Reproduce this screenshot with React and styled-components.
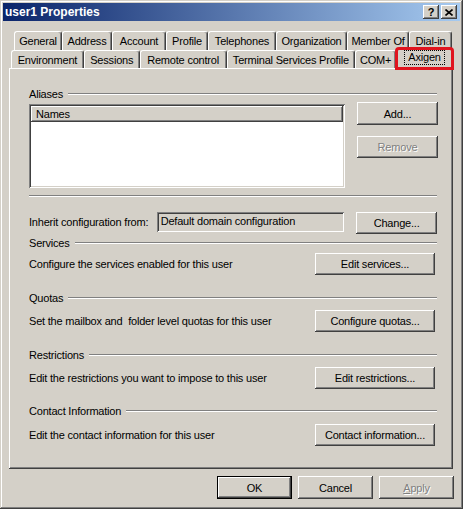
import React from 'react';
import styled, { createGlobalStyle, css } from 'styled-components';

const GlobalStyle = createGlobalStyle`
  html, body {
    margin: 0;
    padding: 0;
    background: #d4d0c8;
  }
  body {
    font-family: "Liberation Sans", Arial, sans-serif;
    font-size: 11px;
    letter-spacing: -0.2px;
    color: #000;
  }
`;

// classic 3d bevels
const raised = css`
  box-shadow:
    inset -1px -1px #404040,
    inset 1px 1px #ffffff,
    inset -2px -2px #808080,
    inset 2px 2px #d4d0c8;
`;

const sunken = css`
  box-shadow:
    inset 1px 1px #808080,
    inset -1px -1px #ffffff,
    inset 2px 2px #404040,
    inset -2px -2px #d4d0c8;
`;

const Window = styled.div`
  width: 463px;
  height: 509px;
  box-sizing: border-box;
  padding: 3px;
  background: #d4d0c8;
  display: flex;
  flex-direction: column;
  box-shadow:
    inset -1px -1px #404040,
    inset 1px 1px #d4d0c8,
    inset -2px -2px #808080,
    inset 2px 2px #ffffff;
`;

const TitleBar = styled.div`
  height: 18px;
  display: flex;
  align-items: center;
  justify-content: space-between;
  padding: 0 3px 0 2px;
  background: linear-gradient(to right, #0a246a, #a6caf0);
`;

const Title = styled.span`
  color: #fff;
  font-weight: bold;
  font-size: 12px;
  letter-spacing: 0;
`;

const TitleButtons = styled.div`
  display: flex;
  gap: 2px;
`;

const TitleButton = styled.div`
  width: 16px;
  height: 14px;
  background: #d4d0c8;
  ${raised};
  display: flex;
  align-items: center;
  justify-content: center;
  font-weight: bold;
  font-size: 11px;
  line-height: 1;
`;

const Body = styled.div`
  flex: 1;
  display: flex;
  flex-direction: column;
  padding: 10px 7px 0 6px;
`;

const TabRow = styled.div`
  display: flex;
  align-items: flex-end;
  height: ${p => p.h}px;
  margin-left: ${p => p.indent}px;
  position: relative;
  z-index: 1;
`;

const Tab = styled.div`
  box-sizing: border-box;
  width: ${p => p.w}px;
  height: ${p => (p.active ? 21 : p.h)}px;
  margin-bottom: ${p => (p.active ? -1 : 0)}px;
  background: #d4d0c8;
  border-top: 1px solid #fff;
  border-left: 1px solid #fff;
  border-right: 1px solid #404040;
  border-radius: 3px 3px 0 0;
  box-shadow: inset -1px 0 #808080;
  display: flex;
  align-items: center;
  justify-content: center;
  padding-bottom: ${p => (p.active ? 3 : 0)}px;
  white-space: nowrap;
  ${p => p.active && css`
    outline: 3px solid #e0141e;
    outline-offset: -2px;
  `}
`;

const FocusLabel = styled.span`
  border: 1px dotted #000;
  padding: 0 3px;
  line-height: 13px;
`;

const Panel = styled.div`
  height: 401px;
  box-sizing: border-box;
  padding: 20px 16px 0 20px;
  ${raised};
  display: flex;
  flex-direction: column;
`;

const Legend = styled.div`
  display: flex;
  align-items: center;
  height: 12px;
  margin-top: ${p => p.mt || 0}px;
`;

const Rule = styled.div`
  flex: 1;
  height: 0;
  border-top: 1px solid #808080;
  border-bottom: 1px solid #fff;
  margin-left: ${p => p.ml || 0}px;
  margin-top: ${p => p.mt || 0}px;
`;

const AliasBody = styled.div`
  display: flex;
  margin-top: 4px;
  height: 84px;
`;

const ListBox = styled.div`
  width: 316px;
  height: 84px;
  box-sizing: border-box;
  padding: 2px;
  background: #fff;
  ${sunken};
`;

const ListHeader = styled.div`
  width: 312px;
  height: 16px;
  box-sizing: border-box;
  padding-left: 5px;
  display: flex;
  align-items: center;
  background: #d4d0c8;
  ${raised};
`;

const ButtonColumn = styled.div`
  display: flex;
  flex-direction: column;
  gap: 11px;
  margin: -2px 0 0 12px;
`;

const Button = styled.button`
  width: ${p => p.w}px;
  height: ${p => p.h || 22}px;
  padding: 0;
  font-family: "Liberation Sans", Arial, sans-serif;
  font-size: 11px;
  letter-spacing: -0.2px;
  color: ${p => (p.disabled ? '#808080' : '#000')};
  text-shadow: ${p => (p.disabled ? '1px 1px 0 #fff' : 'none')};
  background: #d4d0c8;
  border: none;
  ${raised};
  ${p => p.primary && css`
    box-shadow:
      inset 0 0 0 1px #000,
      inset -2px -2px #404040,
      inset 2px 2px #ffffff,
      inset -3px -3px #808080;
  `}
`;

const InheritRow = styled.div`
  display: flex;
  align-items: flex-start;
  margin-top: 15px;
  height: 22px;
`;

const InheritLabel = styled.span`
  width: 128px;
  line-height: 20px;
`;

const Field = styled.div`
  width: 188px;
  height: 20px;
  box-sizing: border-box;
  padding-left: 4px;
  line-height: 18px;
  ${sunken};
  margin-right: 12px;
`;

const SectionRow = styled.div`
  display: flex;
  align-items: center;
  justify-content: space-between;
  margin-top: ${p => p.mt}px;
  padding-right: 2px;
  height: 22px;
`;

const Footer = styled.div`
  display: flex;
  justify-content: flex-end;
  gap: 6px;
  margin: 7px -1px 0 0;
`;

const Mnemonic = styled.span`
  text-decoration: underline;
`;

const topTabs = [
  ['General', 48], ['Address', 50], ['Account', 54], ['Profile', 42],
  ['Telephones', 68], ['Organization', 71], ['Member Of', 62], ['Dial-in', 43],
];

const frontTabs = [
  ['Environment', 73], ['Sessions', 56], ['Remote control', 87],
  ['Terminal Services Profile', 129], ['COM+', 41], ['Axigen', 57],
];

const sections = [
  { title: 'Services', legendMt: 3, rowMt: 4, text: 'Configure the services enabled for this user', action: 'Edit services...' },
  { title: 'Quotas', legendMt: 17, rowMt: 6, text: 'Set the mailbox and\u00a0 folder level quotas for this user', action: 'Configure quotas...' },
  { title: 'Restrictions', legendMt: 17, rowMt: 6, text: 'Edit the restrictions you want to impose to this user', action: 'Edit restrictions...' },
  { title: 'Contact Information', legendMt: 16, rowMt: 7, text: 'Edit the contact information for this user', action: 'Contact information...' },
];

export default function App() {
  return (
    <>
      <GlobalStyle />
      <Window>
        <TitleBar>
          <Title>user1 Properties</Title>
          <TitleButtons>
            <TitleButton>?</TitleButton>
            <TitleButton>
              <svg width="8" height="7" viewBox="0 0 8 7">
                <path d="M0.5 0.5 L7.5 6.5 M7.5 0.5 L0.5 6.5" stroke="#000" strokeWidth="1.6" />
              </svg>
            </TitleButton>
          </TitleButtons>
        </TitleBar>

        <Body>
          <TabRow h={19} indent={5}>
            {topTabs.map(([label, w]) => (
              <Tab key={label} w={w} h={19}>{label}</Tab>
            ))}
          </TabRow>
          <TabRow h={18} indent={2}>
            {frontTabs.map(([label, w]) => (
              <Tab key={label} w={w} h={18} active={label === 'Axigen'}>
                {label === 'Axigen' ? <FocusLabel>{label}</FocusLabel> : label}
              </Tab>
            ))}
          </TabRow>

          <Panel>
            <Legend>
              Aliases
              <Rule ml={5} />
            </Legend>
            <AliasBody>
              <ListBox>
                <ListHeader>Names</ListHeader>
              </ListBox>
              <ButtonColumn>
                <Button w={81} h={23}>Add...</Button>
                <Button w={81} disabled>Remove</Button>
              </ButtonColumn>
            </AliasBody>
            <Rule mt={7} style={{ flex: 'none' }} />

            <InheritRow>
              <InheritLabel>Inherit configuration from:</InheritLabel>
              <Field>Default domain configuration</Field>
              <Button w={81}>Change...</Button>
            </InheritRow>

            {sections.map(s => (
              <React.Fragment key={s.title}>
                <Legend mt={s.legendMt}>
                  {s.title}
                  <Rule ml={5} />
                </Legend>
                <SectionRow mt={s.rowMt}>
                  <span>{s.text}</span>
                  <Button w={120}>{s.action}</Button>
                </SectionRow>
              </React.Fragment>
            ))}
          </Panel>

          <Footer>
            <Button w={75} h={23} primary>OK</Button>
            <Button w={75} h={23}>Cancel</Button>
            <Button w={75} h={23} disabled><Mnemonic>A</Mnemonic>pply</Button>
          </Footer>
        </Body>
      </Window>
    </>
  );
}
